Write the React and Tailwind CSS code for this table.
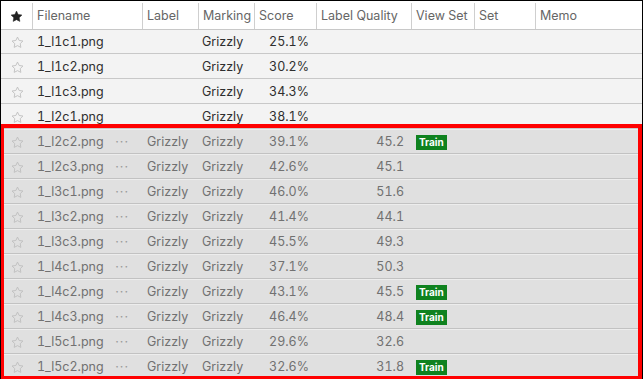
import React from 'react';

const cols = [
  { key: 'star', w: 'w-[32px]' },
  { key: 'Filename', w: 'w-[110px]' },
  { key: 'Label', w: 'w-[56px]' },
  { key: 'Marking', w: 'w-[56px]' },
  { key: 'Score', w: 'w-[62px]' },
  { key: 'Label Quality', w: 'w-[95px]' },
  { key: 'View Set', w: 'w-[63px]' },
  { key: 'Set', w: 'w-[61px]' },
];

const plain = [
  { f: '1_l1c1.png', s: '25.1%' },
  { f: '1_l1c2.png', s: '30.2%' },
  { f: '1_l1c3.png', s: '34.3%' },
  { f: '1_l2c1.png', s: '38.1%' },
];

const picked = [
  { f: '1_l2c2.png', s: '39.1%', q: '45.2', train: true },
  { f: '1_l2c3.png', s: '42.6%', q: '45.1' },
  { f: '1_l3c1.png', s: '46.0%', q: '51.6' },
  { f: '1_l3c2.png', s: '41.4%', q: '44.1' },
  { f: '1_l3c3.png', s: '45.5%', q: '49.3' },
  { f: '1_l4c1.png', s: '37.1%', q: '50.3' },
  { f: '1_l4c2.png', s: '43.1%', q: '45.5', train: true },
  { f: '1_l4c3.png', s: '46.4%', q: '48.4', train: true },
  { f: '1_l5c1.png', s: '29.6%', q: '32.6' },
  { f: '1_l5c2.png', s: '32.6%', q: '31.8', train: true },
];

const Star = ({ filled }) => (
  <svg width="13" height="13" viewBox="0 0 24 24">
    <polygon
      points="12 2 15.09 8.26 22 9.27 17 14.14 18.18 21.02 12 17.77 5.82 21.02 7 14.14 2 9.27 8.91 8.26"
      fill={filled ? '#222' : 'none'}
      stroke={filled ? '#222' : '#bdbdbd'}
      strokeWidth={filled ? 1 : 1.6}
      strokeLinejoin="round"
    />
  </svg>
);

const Row = ({ r, sel, first }) => (
  <div
    className={`flex items-center border-b pt-[2px] ${first ? 'h-[24px]' : 'h-[25px]'} ${
      sel
        ? 'bg-[#e0e0e0] border-[#c2c2c2] text-[#717171] shadow-[inset_0_1px_0_#ededed]'
        : 'bg-[#f3f3f3] border-[#c8c8c8] text-[#2e2e2e]'
    }`}
  >
    <div className="w-[32px] flex justify-center pl-[1px]">
      <Star />
    </div>
    <div className="w-[110px] flex items-center justify-between pl-[4px] pr-[14px]">
      <span>{r.f}</span>
      {sel && <span className="text-[#9a9a9a] tracking-[1px]">···</span>}
    </div>
    <div className="w-[56px] pl-[4px]">{sel ? 'Grizzly' : ''}</div>
    <div className="w-[56px] pl-[3px]">Grizzly</div>
    <div className="w-[62px] text-right pr-[8px]">{r.s}</div>
    <div className="w-[95px] text-right pr-[8px]">{r.q || ''}</div>
    <div className="w-[63px] pl-[4px] flex items-center">
      {r.train && (
        <span className="bg-[#0f821f] text-white text-[10px] font-bold leading-[14px] px-[3px] h-[15px] flex items-center">
          Train
        </span>
      )}
    </div>
    <div className="w-[61px]" />
    <div className="flex-1" />
  </div>
);

export default function App() {
  return (
    <div
      className="relative w-[643px] h-[379px] overflow-hidden bg-white border-l border-t border-r border-black text-[12.5px] tabular-nums"
      style={{ fontFamily: 'Inter, "Noto Sans", sans-serif' }}
    >
      <div className="flex h-[29px] pt-[2px] border-b border-[#c8c8c8] bg-white text-[#666]">
        {cols.map((c) => (
          <div
            key={c.key}
            className={`${c.w} border-r border-[#cfcfcf] flex items-center ${
              c.key === 'star' ? 'justify-center' : 'pl-[4px]'
            }`}
          >
            {c.key === 'star' ? <Star filled /> : c.key}
          </div>
        ))}
        <div className="flex-1 flex items-center pl-[4px]">Memo</div>
      </div>
      {plain.map((r, i) => (
        <Row key={r.f} r={r} first={i === 0} />
      ))}
      {picked.map((r) => (
        <Row key={r.f} r={r} sel />
      ))}
      <div className="absolute left-[-1px] top-[123px] w-[642px] h-[256px] border-4 border-[#ff0000] pointer-events-none" />
    </div>
  );
}
